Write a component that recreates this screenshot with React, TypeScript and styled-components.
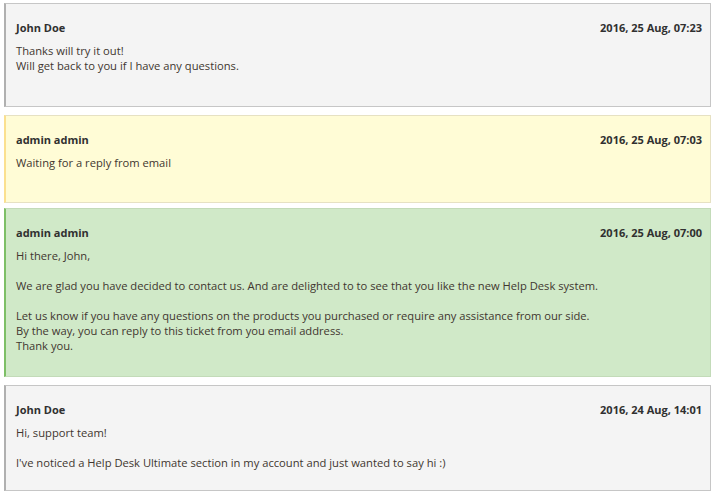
import React from "react";
import styled, { createGlobalStyle, css } from "styled-components";

const Global = createGlobalStyle`
  html, body { margin: 0; padding: 0; background: #ffffff; }
  body { font-family: "Open Sans", "DejaVu Sans", sans-serif; color: #41362f; }
`;

type Tone = "grey" | "yellow" | "green";

const tones: Record<Tone, { bg: string; border: string; left: string }> = {
  grey: { bg: "#f4f4f4", border: "#c6c6c6", left: "#b0b0b0" },
  yellow: { bg: "#fffcd6", border: "#e6e1c3", left: "#fbe08f" },
  green: { bg: "#d0e9c8", border: "#c3dbb9", left: "#7dbf66" },
};

const List = styled.div`
  display: flex;
  flex-direction: column;
  padding: 3px 4px 0 4px;
`;

const Card = styled.div<{ $tone: Tone; $padBottom: number; $after: number }>`
  ${({ $tone, $padBottom, $after }) => css`
    background: ${tones[$tone].bg};
    border: 1px solid ${tones[$tone].border};
    border-left: 2px solid ${tones[$tone].left};
    padding-bottom: ${$padBottom}px;
    margin-bottom: ${$after}px;
  `}
  padding-top: 14px;
  padding-left: 10px;
  padding-right: 8px;
`;

const Header = styled.div`
  display: flex;
  justify-content: space-between;
  align-items: center;
  height: 18px;
  font-size: 11px;
  font-weight: 700;
  color: #303030;
`;

const Body = styled.div`
  margin-top: 7px;
  font-size: 11.2px;
  line-height: 15px;
  white-space: pre-line;
`;

type Msg = { tone: Tone; name: string; date: string; text: string; pad: number; after: number };

const messages: Msg[] = [
  {
    tone: "grey",
    name: "John Doe",
    date: "2016, 25 Aug, 07:23",
    text: "Thanks will try it out!\nWill get back to you if I have any questions.",
    pad: 33,
    after: 8,
  },
  {
    tone: "yellow",
    name: "admin admin",
    date: "2016, 25 Aug, 07:03",
    text: "Waiting for a reply from email",
    pad: 32,
    after: 5,
  },
  {
    tone: "green",
    name: "admin admin",
    date: "2016, 25 Aug, 07:00",
    text:
      "Hi there, John,\n\u00a0\nWe are glad you have decided to contact us. And are delighted to to see that you like the new Help Desk system.\n\u00a0\nLet us know if you have any questions on the products you purchased or require any assistance from our side.\nBy the way, you can reply to this ticket from you email address.\nThank you.",
    pad: 23,
    after: 8,
  },
  {
    tone: "grey",
    name: "John Doe",
    date: "2016, 24 Aug, 14:01",
    text: "Hi, support team!\n\u00a0\nI've noticed a Help Desk Ultimate section in my account and just wanted to say hi :)",
    pad: 20,
    after: 0,
  },
];

export default function App() {
  return (
    <>
      <Global />
      <List>
        {messages.map((m, i) => (
          <Card key={i} $tone={m.tone} $padBottom={m.pad} $after={m.after}>
            <Header>
              <span>{m.name}</span>
              <span>{m.date}</span>
            </Header>
            <Body>{m.text}</Body>
          </Card>
        ))}
      </List>
    </>
  );
}
